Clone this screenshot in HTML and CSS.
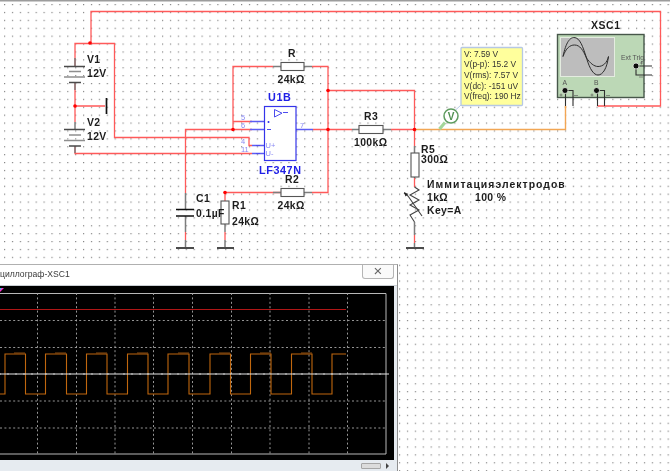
FILE: index.html
```html
<!DOCTYPE html>
<html lang="ru">
<head>
<meta charset="utf-8">
<title>Multisim</title>
<link rel="stylesheet" href="styles.css">
</head>
<body>
<main class="desk">
<svg class="schematic" width="670" height="471" viewBox="0 0 670 471">
  <defs>
    <pattern id="dots" x="4" y="4" width="7.9" height="7.9" patternUnits="userSpaceOnUse">
      <rect width="1.2" height="1.2" class="dot"/>
    </pattern>
  </defs>
  <rect class="topline" width="670" height="1.500"/>
  <rect y="1" width="670" height="470" fill="url(#dots)"/>

  <!-- red wires -->
  <path class="wire" d="M75 66V43.5H114.5V137.5H249V145.5H252"/>
  <path class="wire" d="M91 43.5V11.5H660.5V106H597.5"/>
  <path class="wire" d="M75 82V122M75 106H105"/>
  <path class="wire" d="M75 146V153.5H252"/>
  <path class="wire" d="M185.500 193V129.500H252"/>
  <path class="wire" d="M233 129.500V66.500H273M233 121.500H252"/>
  <path class="wire" d="M312 66.500H328V192.500H312M281 192.500H225V201"/>
  <path class="wire" d="M328 90.500H414.500V146M313 129.500H352M391 129.500H414.500"/>
  <path class="wire" d="M185.500 232V240M225 232V240M414.500 178V187M414.500 235V243"/>
  <path class="orange" d="M414.500 129.500H565.500V106"/>

  <!-- grey leads -->
  <path class="lead" d="M75 58V66M75 82V90M75 122V129M75 146V153M185.500 193V209M185.500 216V232M185.500 240V247M225 224V232M225 240V247M273 66.500H281M304 66.500H312M273 192.500H281M304 192.500H312M352 129.500H359M383 129.500H391M414.500 146V153M414.500 177V178M414.500 222V235M414.500 243V247"/>

  <!-- batteries -->
  <path class="plate" d="M64 66.500H85M69 82.500H81M64 129.500H85M69 146H81"/>
  <path class="plate-light" d="M69 71.500H81M64 77H85M69 135H81M64 140.500H85"/>
  <!-- capacitor and grounds -->
  <path class="ground" d="M176 209.500H194M176 216H194M176 248H194M217 248H234M406 248H424M106.500 98V114"/>

  <!-- resistors -->
  <rect class="part" x="281" y="62.500" width="23" height="8"/>
  <rect class="part" x="281" y="188.500" width="23" height="8"/>
  <rect class="part" x="359" y="125.500" width="24" height="8"/>
  <rect class="part" x="221" y="201" width="8" height="23"/>
  <rect class="part" x="411" y="153" width="8" height="24"/>
  <path class="zig" d="M414.500 187L419 190L410 195L419 200L410 205L419 210L410 215L414.500 222"/>
  <path class="zig" d="M404 193L408 196M408 196L422 216"/>
  <path class="arrow" d="M404 192L408 194L405.500 196.500Z"/>

  <!-- junctions -->
  <circle class="node" cx="90" cy="43" r="1.800"/>
  <circle class="node" cx="75" cy="106" r="1.800"/>
  <circle class="node" cx="233" cy="129.500" r="1.800"/>
  <circle class="node" cx="328" cy="90.500" r="1.800"/>
  <circle class="node" cx="328" cy="129.500" r="1.800"/>
  <circle class="node" cx="414.500" cy="129.500" r="1.800"/>
  <circle class="node" cx="225" cy="192.500" r="1.800"/>

  <!-- op-amp -->
  <path class="blue" d="M250 121.500H265M250 129.500H265M252 145.500H265M252 153.500H265M296 129.500H313"/>
  <rect class="chip" x="264.500" y="106.500" width="31.500" height="54"/>
  <path class="chip-mark" d="M274.500 109.500V117L282 113.200Z"/>
  <path class="chip-mark" d="M283 112.500H288"/>
  <text class="pin" x="241" y="120">5</text>
  <text class="pin" x="241" y="128">6</text>
  <text class="pin" x="241" y="144">4</text>
  <text class="pin" x="241" y="152">11</text>
  <text class="pin" x="300" y="128">7</text>
  <text class="pin" x="265.500" y="148">U+</text>
  <text class="pin" x="265.500" y="156">U-</text>
  <circle class="pin-dot" cx="268.500" cy="122" r="1"/>
  <path class="chip-mark" d="M267 129.500H271M256 145.500H260M256 153.500H260"/>
  <text class="chip-label" x="268" y="101">U1B</text>
  <text class="chip-label" x="259" y="173.500">LF347N</text>

  <!-- labels -->
  <g class="labels">
    <text x="87" y="63">V1</text>
    <text x="87" y="76.500">12V</text>
    <text x="87" y="126">V2</text>
    <text x="87" y="140">12V</text>
    <text x="196" y="202">C1</text>
    <text x="196" y="217">0.1µF</text>
    <text x="232" y="209">R1</text>
    <text x="232" y="225">24kΩ</text>
    <text x="288" y="56.500">R</text>
    <text x="277.500" y="82.500">24kΩ</text>
    <text x="285" y="183">R2</text>
    <text x="277.500" y="209">24kΩ</text>
    <text x="364" y="120">R3</text>
    <text x="354" y="146">100kΩ</text>
    <text x="421" y="152.500">R5</text>
    <text x="421" y="162.500">300Ω</text>
    <text class="wide" x="427" y="187.500">Иммитацияэлектродов</text>
    <text x="427" y="201">1kΩ</text>
    <text x="475" y="201">100 %</text>
    <text x="427" y="213.500">Key=A</text>
    <text class="scope-name" x="591" y="29">XSC1</text>
  </g>

  <!-- probe -->
  <path class="probe-stub" d="M439.500 129L445 122.500"/>
  <path class="probe-leader" d="M455 110.500L461 105"/>
  <circle class="probe" cx="451" cy="116" r="7"/>
  <text class="probe-v" x="451" y="119.500">V</text>
  <rect class="tip" x="461" y="47.500" width="61.500" height="58" rx="1"/>
  <g class="tip-text">
    <text x="464" y="56.500">V: 7.59 V</text>
    <text x="464" y="67">V(p-p): 15.2 V</text>
    <text x="464" y="77.500">V(rms): 7.57 V</text>
    <text x="464" y="88.500">V(dc): -151 uV</text>
    <text x="464" y="99">V(freq): 190 Hz</text>
  </g>

  <!-- oscilloscope instrument -->
  <rect class="scope" x="557.500" y="34.500" width="86.500" height="63"/>
  <rect class="screen" x="560.500" y="37.500" width="54" height="39"/>
  <path class="trace" d="M563 56.500C566 42 570 37.500 574 37.500C580 37.500 583 47 586.500 58C590 70 594 75 598 75C603 75 607 68 608.500 56.500"/>
  <path class="trace" d="M563 56.500C566 48 570 45 574.500 45C580 45 583 50 586.500 58C590 63 594 66.500 598 66.500C603 66.500 607 63 608.500 56.500"/>
  <text class="scope-text" x="621" y="59.500">Ext Trig</text>
  <text class="scope-text" x="562.500" y="85">A</text>
  <text class="scope-text" x="594" y="85">B</text>
  <path class="scope-lead" d="M565.500 90.500V106M565.500 90.500H573V106M597.500 90.500V106M597.500 90.500H604.500V106M636 66H652M636 66V75H652"/>
  <path class="orange" d="M565.500 106V108"/>
  <circle class="jack" cx="565" cy="90.500" r="3"/>
  <circle class="jack" cx="596.500" cy="90.500" r="3"/>
  <circle class="jack" cx="636" cy="66" r="3"/>
  <path class="sign" d="M559.500 95H562.500M561 93.500V96.500M574 95.500H578M590.500 95H593.500M592 93.500V96.500M606 95.500H610M640 63H643M641.500 61.500V64.500M639 77H643"/>
</svg>

<section class="window">
  <header class="titlebar">
    <span class="title">циллограф-XSC1</span>
    <span class="close">×</span>
  </header>
  <svg class="plot" width="394" height="174" viewBox="0 286 394 174">
    <rect class="plot-bg" x="0" y="286" width="394" height="174"/>
    <path class="plot-border" d="M0 293.500H386V454H0"/>
    <path class="grid" d="M37.500 293V454M76.500 293V454M115 293V454M153.500 293V454M192.500 293V454M231.500 293V454M270 293V454M309 293V454M347.500 293V454M0 320.500H386M0 347.500H386M0 401H386M0 428H386"/>
    <path class="ch-red" d="M0 309.500H346"/>
    <path class="ch-square" d="M0 394H5V354H25.500V394H45.500V354H66.500V394H86.500V354H107V394H127.500V354H148V394H168V354H189V394H210V354H230.500V394H250.500V354H271V394H291.500V354H312V394H332V354H346"/>
    <path class="ch-bump" d="M14 353H25M55 353H66M96 353H107M137 353H148M178 353H189M219 353H230M260 353H271M301 353H312"/>
    <path class="ch-center" d="M0 374H389"/>
    <path class="ticks" d="M0 373V375M8 373V375M16 373V375M24 373V375M32 373V375M46 373V375M54 373V375M62 373V375M70 373V375M84 373V375M92 373V375M100 373V375M108 373V375M124 373V375M132 373V375M140 373V375M148 373V375M162 373V375M170 373V375M178 373V375M186 373V375M200 373V375M208 373V375M216 373V375M224 373V375M240 373V375M248 373V375M256 373V375M264 373V375M278 373V375M286 373V375M294 373V375M302 373V375M316 373V375M324 373V375M332 373V375M340 373V375M356 373V375M364 373V375M372 373V375M380 373V375"/>
    <path class="trigger-a" d="M0 288H4L0 292Z"/>
    <path class="trigger-b" d="M0 288H2L0 290Z"/>
  </svg>
  <div class="scrollrow">
    <span class="thumb"></span>
    <span class="scroll-arrow"></span>
  </div>
</section>
</main>
</body>
</html>
```
FILE: styles.css
```css
html, body {
  margin: 0;
  padding: 0;
  width: 670px;
  height: 471px;
  overflow: hidden;
  background: #fff;
}
.desk {
  position: relative;
  width: 670px;
  height: 471px;
  overflow: hidden;
  font-family: "Liberation Sans", Arial, sans-serif;
}
.schematic {
  display: block;
  filter: blur(0.25px);
}
.schematic text { font-family: "Liberation Sans", Arial, sans-serif; }
.dot { fill: #858585; }
.topline { fill: #9c9c9c; }
.wire, .orange, .lead, .plate, .plate-light, .ground, .part, .zig, .blue, .chip, .chip-mark, .trace, .scope-lead, .sign, .probe-stub, .probe-leader, .probe { fill: none; }
.wire { stroke: #ff5a5a; stroke-width: 1.3; }
.orange { stroke: #f2a654; stroke-width: 1.4; }
.lead { stroke: #7d7d7d; stroke-width: 1.5; }
.plate { stroke: #4a4a4a; stroke-width: 1.3; }
.plate-light { stroke: #8e8e8e; stroke-width: 1.5; }
.ground { stroke: #111; stroke-width: 1.7; }
.part { stroke: #555; stroke-width: 1.1; fill: #fff; }
.zig { stroke: #444; stroke-width: 1.1; }
.arrow { fill: #222; }
.node { fill: #f00; }
.blue { stroke: #5c5cf3; stroke-width: 1.4; }
.chip { stroke: #3434ea; stroke-width: 1.2; fill: #fff; }
.chip-mark { stroke: #4c4cee; stroke-width: 1; }
.pin { fill: #8a8af3; font-size: 7.5px; }
.pin-dot { fill: #2c2ce8; }
.chip-label { fill: #2020e6; font-size: 10.8px; font-weight: 700; letter-spacing: .6px; }
.labels text { fill: #1c1c1c; font-size: 10.4px; font-weight: 700; letter-spacing: .4px; }
.labels .wide { letter-spacing: 1.05px; }
.labels .scope-name { letter-spacing: .6px; }
.probe-stub { stroke: #a3d69a; stroke-width: 3.2; }
.probe-leader { stroke: #b8cbe6; stroke-width: 1; }
.probe { stroke: #5f9c5f; stroke-width: 1.5; fill: #fff; }
.probe-v { fill: #4f8f4f; font-size: 10px; font-weight: 700; text-anchor: middle; }
.tip { fill: #ffff9c; stroke: #b6c8e4; stroke-width: 1.3; }
.tip-text text { fill: #333; font-size: 8.4px; }
.scope { fill: #bcd8b6; stroke: #47574a; stroke-width: 1.4; }
.screen { fill: #bdbdbd; stroke: #e4ece0; stroke-width: 1; }
.trace { stroke: #2e2e2e; stroke-width: 1; }
.scope-text { fill: #555; font-size: 6.8px; }
.scope-lead { stroke: #2e2e2e; stroke-width: 1.1; }
.jack { fill: #0c0c0c; stroke: #e8efe6; stroke-width: .8; }
.sign { stroke: #555; stroke-width: .6; }

.window {
  position: absolute;
  left: 0;
  top: 264px;
  width: 398px;
  height: 207px;
  display: flex;
  flex-direction: column;
  box-sizing: border-box;
  background: #e6ebf0;
  border-top: 1px solid #b0b0b0;
  border-right: 1px solid #8e8e8e;
  filter: blur(0.25px);
}
.titlebar {
  height: 20px;
  flex: none;
  display: flex;
  justify-content: space-between;
  background: #fff;
  border-bottom: 1px solid #c9ced3;
  box-sizing: content-box;
}
.title {
  font-size: 8.6px;
  color: #3a3a3a;
  line-height: 19px;
}
.close {
  width: 32px;
  height: 14px;
  margin-right: 3px;
  box-sizing: border-box;
  border: 1px solid #b5b5b5;
  border-top: 0;
  border-radius: 0 0 3px 3px;
  background: #fafafa;
  color: #666;
  font-size: 15px;
  line-height: 12px;
  text-align: center;
}
.plot { display: block; flex: none; }
.plot-bg { fill: #000; }
.plot-border { fill: none; stroke: #b8b8b8; stroke-width: 1; }
.grid { fill: none; stroke: #a6a6a6; stroke-width: .9; stroke-dasharray: 2 2.400; }
.ch-red { fill: none; stroke: #b01616; stroke-width: 1; }
.ch-square { fill: none; stroke: #c0670e; stroke-width: 1.1; }
.ch-bump { fill: none; stroke: #8a4c10; stroke-width: 1; }
.ch-center { fill: none; stroke: #e6e6e6; stroke-width: 1; }
.ticks { fill: none; stroke: #dcdcdc; stroke-width: .8; }
.trigger-a { fill: #ff2fd0; }
.trigger-b { fill: #23d6e6; }
.scrollrow {
  flex: 1;
  display: flex;
  align-items: center;
  justify-content: flex-end;
  gap: 5px;
  padding-right: 8px;
}
.thumb {
  width: 20px;
  height: 6px;
  box-sizing: border-box;
  border: 1px solid #a6a6a6;
  border-radius: 1px;
  background: #dcdcdc;
}
.scroll-arrow {
  width: 0;
  height: 0;
  border-left: 3px solid #444;
  border-top: 3px solid transparent;
  border-bottom: 3px solid transparent;
}
```
